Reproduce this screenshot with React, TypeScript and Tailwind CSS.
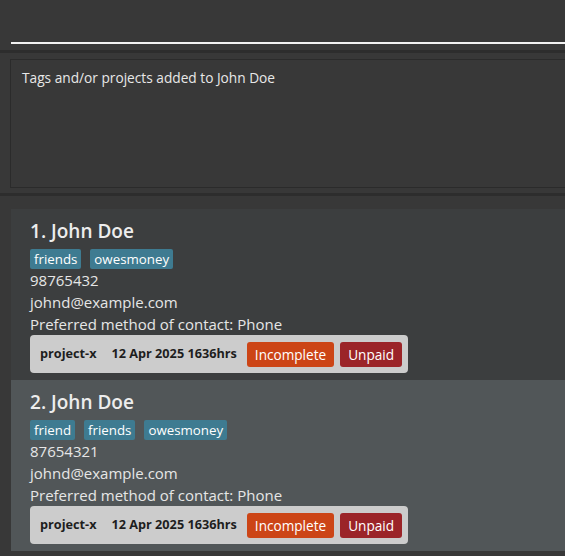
import React from "react";

const font = { fontFamily: '"Open Sans", "Noto Sans", sans-serif' };

function Tag({ label }: { label: string }) {
  return (
    <span className="h-[20px] px-[4px] rounded-[2px] bg-[#3e7b91] text-white text-[13.3px] leading-[20px]">
      {label}
    </span>
  );
}

function Card({
  idx,
  tags,
  phone,
  bg,
}: {
  idx: number;
  tags: string[];
  phone: string;
  bg: string;
}) {
  return (
    <div className={`h-[171px] pl-[19px] pt-[10px] ${bg}`}>
      <div className="text-[19px] font-semibold text-[#ededed] leading-[24px]">
        {idx}. John Doe
      </div>
      <div className="flex gap-[9px] mt-[6px]">
        {tags.map((t) => (
          <Tag key={t} label={t} />
        ))}
      </div>
      <div className="text-[15px] text-[#e6e6e6] leading-[22px]">
        <div>{phone}</div>
        <div>johnd@example.com</div>
        <div>Preferred method of contact: Phone</div>
      </div>
      <div className="inline-flex items-center h-[38px] rounded-[4px] bg-[#cccccc] pl-[10px] pr-[6px] text-[12.7px]">
        <span className="font-bold text-[#1e1e1e]">project-x</span>
        <span className="ml-[15px] font-bold text-[#1e1e1e]">12 Apr 2025 1636hrs</span>
        <span className="ml-[10px] h-[25px] px-[8px] rounded-[3px] bg-[#cc4516] text-white text-[13.6px] leading-[25px]">
          Incomplete
        </span>
        <span className="ml-[6px] h-[25px] px-[8px] rounded-[3px] bg-[#9b2428] text-white text-[13.6px] leading-[25px]">
          Unpaid
        </span>
      </div>
    </div>
  );
}

export default function App() {
  return (
    <div className="w-[565px] h-[556px] bg-[#383838] overflow-hidden" style={font}>
      <div className="h-[50px] pl-[11px] pt-[42px]">
        <div className="h-[2px] bg-[#f2f2f2]" />
      </div>
      <div className="h-[3px] bg-[#2d2d2d]" />
      <div className="h-[140px] pl-[10px] pt-[6px]">
        <div className="h-[129px] border border-[#2b2b2b] border-r-0 pl-[11px] pt-[8px] text-[13.7px] text-[#e8e8e8] leading-[20px]">
          Tags and/or projects added to John Doe
        </div>
      </div>
      <div className="h-[3px] bg-[#2d2d2d]" />
      <div className="pl-[11px] pt-[13px]">
        <Card idx={1} tags={["friends", "owesmoney"]} phone="98765432" bg="bg-[#3c3e3f]" />
        <Card idx={2} tags={["friend", "friends", "owesmoney"]} phone="87654321" bg="bg-[#515658]" />
      </div>
    </div>
  );
}
